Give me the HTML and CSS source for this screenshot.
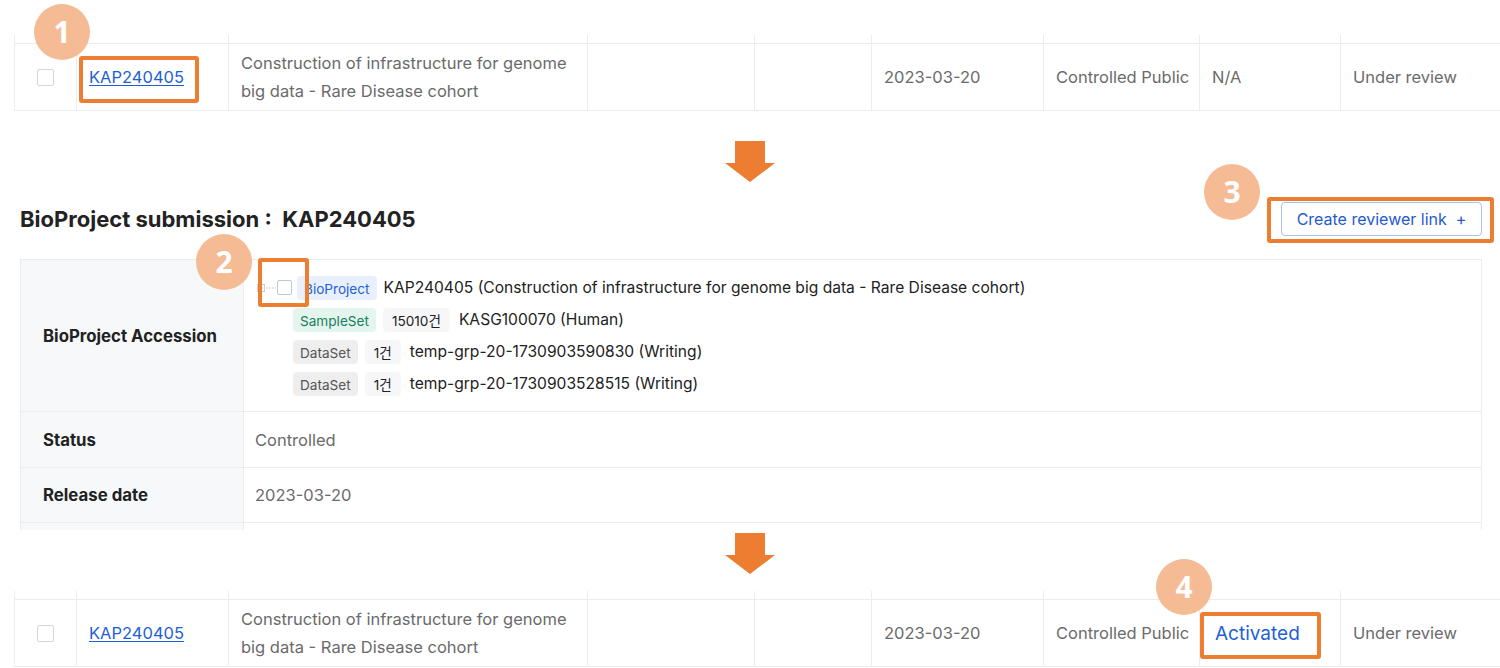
FILE: index.html
```html
<!DOCTYPE html>
<html lang="en">
<head>
  <meta charset="UTF-8">
  <title>Reviewer link guide</title>
  <link rel="stylesheet" href="styles.css">
</head>
<body>
  <div class="page">

    <!-- submission list, before -->
    <div class="list">
      <div class="trow stub">
        <div></div><div></div><div></div><div></div><div></div><div></div><div></div><div></div><div></div>
      </div>
      <div class="trow">
        <div class="cell center"><span class="check"></span></div>
        <div class="cell"><a class="acc" href="#">KAP240405</a></div>
        <div class="cell title">Construction of infrastructure for genome big data - Rare Disease cohort</div>
        <div class="cell"></div>
        <div class="cell"></div>
        <div class="cell">2023-03-20</div>
        <div class="cell">Controlled Public</div>
        <div class="cell">N/A</div>
        <div class="cell">Under review</div>
      </div>
    </div>

    <div class="arrow first">
      <svg width="50" height="41" viewBox="0 0 50 41"><path d="M10 0H40V22H50L25 41L0 22H10Z" fill="#ed7d31"/></svg>
    </div>

    <!-- submission detail -->
    <div class="detail-head">
      <h2>BioProject submission :&nbsp; KAP240405</h2>
      <button class="btn-link">Create reviewer link&nbsp; +</button>
    </div>

    <div class="detail">
      <div class="drow tall">
        <div class="label">BioProject Accession</div>
        <div class="value tree">
          <div class="node root">
            <svg class="twig" width="20" height="12" viewBox="0 0 20 12"><rect x="0.5" y="2.5" width="7" height="7" fill="none" stroke="#c9ced6"/><path d="M2 6H6M4 4V8" stroke="#c9ced6"/><path d="M9 6H19" stroke="#c9ced6" stroke-dasharray="2 1"/></svg>
            <span class="check small"></span>
            <span class="tag blue">BioProject</span>
            <span class="name">KAP240405 (Construction of infrastructure for genome big data - Rare Disease cohort)</span>
          </div>
          <div class="node">
            <span class="tag green">SampleSet</span>
            <span class="tag count">15010건</span>
            <span class="name">KASG100070 (Human)</span>
          </div>
          <div class="node">
            <span class="tag grey">DataSet</span>
            <span class="tag count">1건</span>
            <span class="name">temp-grp-20-1730903590830 (Writing)</span>
          </div>
          <div class="node">
            <span class="tag grey">DataSet</span>
            <span class="tag count">1건</span>
            <span class="name">temp-grp-20-1730903528515 (Writing)</span>
          </div>
        </div>
      </div>
      <div class="drow">
        <div class="label">Status</div>
        <div class="value">Controlled</div>
      </div>
      <div class="drow short">
        <div class="label">Release date</div>
        <div class="value">2023-03-20</div>
      </div>
      <div class="drow stub">
        <div class="label"></div>
        <div class="value"></div>
      </div>
    </div>

    <div class="arrow second">
      <svg width="50" height="41" viewBox="0 0 50 41"><path d="M10 0H40V22H50L25 41L0 22H10Z" fill="#ed7d31"/></svg>
    </div>

    <!-- submission list, after -->
    <div class="list after">
      <div class="trow stub">
        <div></div><div></div><div></div><div></div><div></div><div></div><div></div><div></div><div></div>
      </div>
      <div class="trow">
        <div class="cell center"><span class="check"></span></div>
        <div class="cell"><a class="acc" href="#">KAP240405</a></div>
        <div class="cell title">Construction of infrastructure for genome big data - Rare Disease cohort</div>
        <div class="cell"></div>
        <div class="cell"></div>
        <div class="cell">2023-03-20</div>
        <div class="cell">Controlled Public</div>
        <div class="cell"><span class="active">Activated</span></div>
        <div class="cell">Under review</div>
      </div>
    </div>

    <!-- guide markers -->
    <div class="mark m1"></div>
    <div class="mark m2"></div>
    <div class="mark m3"></div>
    <div class="mark m4"></div>
    <div class="step s1">1</div>
    <div class="step s2">2</div>
    <div class="step s3">3</div>
    <div class="step s4">4</div>
  </div>
</body>
</html>
```

FILE: styles.css
```css
/* Global */
body {
  margin: 0;
  background: #fff;
  font-family: Inter, "Noto Sans CJK KR", sans-serif;
  color: #222;
}

.page {
  position: relative;
  width: 1500px;
  height: 668px;
  overflow: hidden;
  padding-top: 35px;
  box-sizing: border-box;
}

/* list rows */
.list {
  margin-left: 14px;
}

.trow {
  display: grid;
  grid-template-columns: 63px 152px 359px 167px 117px 172px 156px 141px 200px;
  border-bottom: 1px solid #ececec;
}

.trow > div {
  border-right: 1px solid #ececec;
}

.trow > div:first-child {
  border-left: 1px solid #ececec;
}

.trow.stub {
  height: 8px;
}

.cell {
  height: 66px;
  padding: 0 0 0 12px;
  display: flex;
  align-items: center;
  font-size: 16.5px;
  color: #6b6b6b;
  white-space: nowrap;
  box-sizing: border-box;
}

.cell.center {
  justify-content: center;
  padding: 0;
}

.cell.title {
  padding-right: 12px;
  line-height: 28px;
  white-space: normal;
}

.check {
  width: 17px;
  height: 17px;
  border: 1px solid #d6d6d6;
  border-radius: 2px;
  box-sizing: border-box;
}

.acc {
  color: #1f5fd6;
  text-decoration: underline;
  text-underline-offset: 2px;
}

.active {
  color: #1f5fd6;
  font-size: 19px;
  padding-left: 3px;
}

/* arrows */
.arrow {
  display: flex;
  justify-content: center;
}

.arrow svg {
  display: block;
}

.arrow.first {
  margin-top: 30px;
}

.arrow.second {
  margin-top: 3px;
  margin-bottom: 17px;
}

/* detail */
.detail-head {
  display: flex;
  align-items: center;
  justify-content: space-between;
  height: 35px;
  margin: 19px 18px 0 20px;
}

.detail-head h2 {
  margin: 0;
  font-size: 22px;
  font-weight: 700;
  color: #222;
}

.btn-link {
  height: 34px;
  width: 201px;
  margin-top: 1px;
  border: 1px solid #a9c2f0;
  border-radius: 4px;
  background: #fff;
  color: #1f5ad1;
  font-family: inherit;
  font-size: 16px;
}

.detail {
  margin: 23px 18px 0 20px;
  border-top: 1px solid #ececec;
  border-right: 1px solid #ececec;
}

.drow {
  display: grid;
  grid-template-columns: 224px 1fr;
  height: 56px;
  border-bottom: 1px solid #ececec;
  box-sizing: border-box;
}

.drow.tall {
  height: 152px;
}

.drow.short {
  height: 55px;
}

.drow.stub {
  height: 7px;
  border-bottom: none;
}

.label {
  background: #f7f8fa;
  border-left: 1px solid #ececec;
  border-right: 1px solid #ececec;
  display: flex;
  align-items: center;
  padding-left: 22px;
  font-size: 16.8px;
  font-weight: 700;
  color: #222;
}

.value {
  display: flex;
  align-items: center;
  padding-left: 11px;
  font-size: 16.5px;
  color: #6b6b6b;
}

/* tree */
.value.tree {
  flex-direction: column;
  align-items: flex-start;
  justify-content: center;
  gap: 8px;
  padding-left: 49px;
}

.node {
  display: flex;
  align-items: center;
  gap: 7px;
  height: 24px;
}

.node.root {
  margin-left: -36px;
}

.twig {
  margin-right: -7px;
}

.check.small {
  width: 15px;
  height: 15px;
  border-color: #bcc8d8;
  margin-right: -2px;
}

.tag {
  height: 24px;
  line-height: 26px;
  padding: 0 7px;
  border-radius: 4px;
  font-size: 13.6px;
  box-sizing: border-box;
}

.tag.blue {
  background: #e9f0fd;
  color: #2461d4;
}

.tag.green {
  background: #e4f5ee;
  color: #17805a;
}

.tag.grey {
  background: #eeeeef;
  color: #555;
}

.tag.count {
  background: #f6f7f9;
  color: #222;
  padding: 0 9px;
}

.name {
  margin-left: 2px;
  font-size: 15.6px;
  color: #222;
}

.root .name {
  margin-left: 0;
}

/* guide markers */
.mark {
  position: absolute;
  border: 4px solid #ed7d31;
  border-radius: 3px;
  box-sizing: border-box;
}

.m1 { left: 79px; top: 56px; width: 120px; height: 47px; }
.m2 { left: 258px; top: 258px; width: 51px; height: 49px; }
.m3 { left: 1267px; top: 197px; width: 227px; height: 46px; }
.m4 { left: 1200px; top: 612px; width: 121px; height: 47px; }

.step {
  position: absolute;
  width: 56px;
  height: 56px;
  border-radius: 50%;
  background: #f5bb95;
  color: #fff;
  font-family: "Open Sans", sans-serif;
  font-weight: 700;
  font-size: 30px;
  line-height: 56px;
  text-align: center;
}

.s1 { left: 34px; top: 4px; }
.s2 { left: 196px; top: 234px; }
.s3 { left: 1204px; top: 164px; }
.s4 { left: 1156px; top: 559px; }
```
